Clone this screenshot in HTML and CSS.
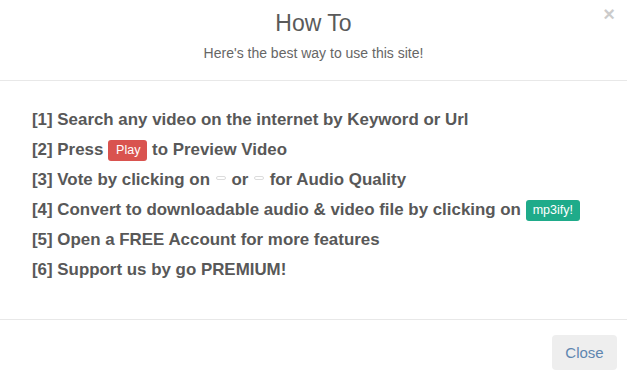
FILE: index.html
```html
<!DOCTYPE html>
<html>
<head>
<meta charset="utf-8">
<link rel="stylesheet" href="styles.css">
</head>
<body>
<div class="modal">
  <div class="modal-header">
    <button class="close-x" type="button">×</button>
    <h2 class="title">How To</h2>
    <p class="subtitle">Here's the best way to use this site!</p>
  </div>
  <div class="modal-body">
    <div class="step">[1] Search any video on the internet by Keyword or Url</div>
    <div class="step">[2] Press <span class="badge badge-red">Play</span> to Preview Video</div>
    <div class="step">[3] Vote by clicking on <span class="pill"></span> or <span class="pill"></span> for Audio Quality</div>
    <div class="step">[4] Convert to downloadable audio &amp; video file by clicking on <span class="badge badge-green">mp3ify!</span></div>
    <div class="step">[5] Open a FREE Account for more features</div>
    <div class="step">[6] Support us by go PREMIUM!</div>
  </div>
  <div class="modal-footer">
    <button class="btn-close" type="button">Close</button>
  </div>
</div>
</body>
</html>
```
FILE: styles.css
```css
html, body {
  margin: 0;
  padding: 0;
  background: #fff;
}
body {
  font-family: "Liberation Sans", Arial, sans-serif;
  color: #555;
}
.modal {
  position: relative;
  width: 627px;
  height: 382px;
  background: #fff;
}
.modal-header {
  height: 81px;
  box-sizing: border-box;
  padding-top: 10px;
  border-bottom: 1px solid #e8e8e8;
  text-align: center;
}
.close-x {
  position: absolute;
  top: 2px;
  right: 12px;
  border: 0;
  background: transparent;
  padding: 0;
  font-family: "Liberation Sans", Arial, sans-serif;
  font-size: 20px;
  font-weight: bold;
  color: #000;
  opacity: 0.2;
  line-height: 24px;
}
.title {
  margin: 0;
  font-size: 23px;
  font-weight: normal;
  line-height: 26px;
  color: #5a5a5a;
}
.subtitle {
  margin: 9px 0 0;
  font-size: 14px;
  line-height: 16px;
  color: #666;
}
.modal-body {
  padding: 24px 0 0 32px;
  height: 239px;
  box-sizing: border-box;
  border-bottom: 1px solid #e8e8e8;
}
.step {
  font-size: 16.9px;
  font-weight: bold;
  line-height: 30px;
  color: #585858;
  white-space: nowrap;
}
.badge {
  display: inline-block;
  color: #fff;
  font-weight: normal;
  font-size: 12.5px;
  line-height: 21px;
  border-radius: 3px;
  vertical-align: 1px;
}
.badge-red {
  background: #d9534f;
  padding: 0 7px 0 8px;
}
.badge-green {
  background: #1fab8a;
  padding: 0 7px;
}
.pill {
  display: inline-block;
  width: 8px;
  height: 2px;
  border: 1px solid #dcdcdc;
  border-radius: 3px;
  vertical-align: 5px;
  margin: 0 1px;
}
.modal-footer {
  display: flex;
  justify-content: flex-end;
  padding: 15px 10px 0 0;
}
.btn-close {
  border: 0;
  background: #eeeeee;
  border-radius: 4px;
  height: 35px;
  width: 65px;
  padding: 0;
  font-family: "Liberation Sans", Arial, sans-serif;
  font-size: 15px;
  color: #5e86b0;
}
```
